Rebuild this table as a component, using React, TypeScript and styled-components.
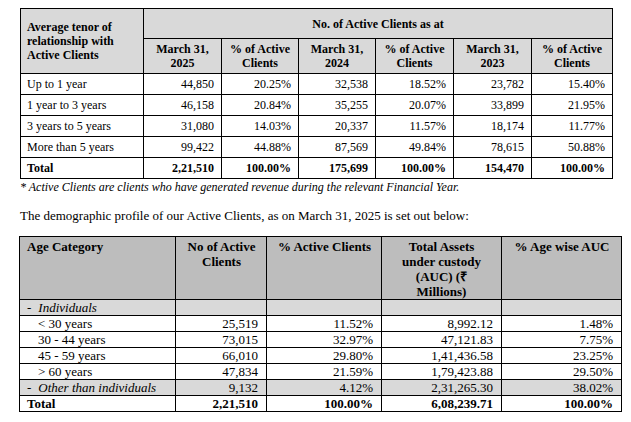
import React from "react";
import styled, { createGlobalStyle } from "styled-components";

const Global = createGlobalStyle`
  html, body { margin: 0; padding: 0; background: #fff; }
  body { font-family: "Liberation Serif", "Times New Roman", serif; color: #000; }
`;

const Page = styled.div`
  width: 631px;
  height: 422px;
  padding: 8px 0 0 20px;
  box-sizing: border-box;
  display: flex;
  flex-direction: column;
  overflow: hidden;
`;

const Table = styled.table<{ $w: number }>`
  border-collapse: collapse;
  table-layout: fixed;
  width: ${(p) => p.$w}px;
  font-size: 12px;
`;

const HeadCell = styled.th<{ $align?: string; $h?: number; $bg?: string }>`
  border: 1px solid #000;
  background: ${(p) => p.$bg || "#d9d9d9"};
  font-weight: bold;
  text-align: ${(p) => p.$align || "center"};
  vertical-align: middle;
  padding: 0 6px;
  line-height: 14px;
  height: ${(p) => p.$h || 20}px;
  box-sizing: border-box;
`;

const Cell = styled.td<{ $bold?: boolean; $left?: boolean }>`
  border: 1px solid #000;
  height: 21px;
  padding: 0 7px 0 6px;
  text-align: ${(p) => (p.$left ? "left" : "right")};
  font-weight: ${(p) => (p.$bold ? "bold" : "normal")};
  line-height: 14px;
  box-sizing: border-box;
`;

const Note = styled.div`
  font-style: italic;
  font-size: 12px;
  line-height: 14px;
  margin-top: 1px;
`;

const Para = styled.p`
  font-size: 13px;
  line-height: 16px;
  margin: 14px 0 0 0;
`;

const Table2 = styled.table`
  border-collapse: collapse;
  table-layout: fixed;
  width: 602px;
  font-size: 13px;
  margin-top: 12px;
  margin-left: -1px;
  border: 1.5px solid #000;
`;

const Head2 = styled.th<{ $left?: boolean; $pad?: number }>`
  border: 1px solid #000;
  background: #bdbdbd;
  font-weight: bold;
  text-align: ${(p) => (p.$left ? "left" : "center")};
  vertical-align: top;
  padding: 2px ${(p) => p.$pad ?? 6}px 0 ${(p) => p.$pad ?? 7}px;
  line-height: 15px;
  height: 62px;
  box-sizing: border-box;
`;

const Row2 = styled.tr<{ $shade?: boolean }>`
  background: ${(p) => (p.$shade ? "#d9d9d9" : "#fff")};
`;

const Cell2 = styled.td<{ $bold?: boolean; $left?: boolean; $indent?: boolean }>`
  border: 1px solid #000;
  height: 16px;
  padding: 0 8px 0 ${(p) => (p.$indent ? 18 : 7)}px;
  text-align: ${(p) => (p.$left ? "left" : "right")};
  font-weight: ${(p) => (p.$bold ? "bold" : "normal")};
  line-height: 15px;
  box-sizing: border-box;
  white-space: nowrap;
`;

const Dashed = styled.span`
  display: inline-flex;
  gap: 7px;
  font-style: italic;
`;

const Plain = styled.span`
  font-style: normal;
`;

const rows1 = [
  ["Up to 1 year", "44,850", "20.25%", "32,538", "18.52%", "23,782", "15.40%"],
  ["1 year to 3 years", "46,158", "20.84%", "35,255", "20.07%", "33,899", "21.95%"],
  ["3 years to 5 years", "31,080", "14.03%", "20,337", "11.57%", "18,174", "11.77%"],
  ["More than 5 years", "99,422", "44.88%", "87,569", "49.84%", "78,615", "50.88%"],
];

const total1 = ["Total", "2,21,510", "100.00%", "175,699", "100.00%", "154,470", "100.00%"];

const rows2 = [
  ["< 30 years", "25,519", "11.52%", "8,992.12", "1.48%"],
  ["30 - 44 years", "73,015", "32.97%", "47,121.83", "7.75%"],
  ["45 - 59 years", "66,010", "29.80%", "1,41,436.58", "23.25%"],
  ["> 60 years", "47,834", "21.59%", "1,79,423.88", "29.50%"],
];

export default function App() {
  const w1 = [123, 78, 77, 77, 78, 78, 81];
  const w2 = [156, 91, 115, 120, 120];
  return (
    <>
      <Global />
      <Page>
        <Table $w={593}>
          <colgroup>
            {w1.map((w, i) => (
              <col key={i} style={{ width: w }} />
            ))}
          </colgroup>
          <thead>
            <tr>
              <HeadCell rowSpan={2} $align="left" $h={30}>
                Average tenor of relationship with Active Clients
              </HeadCell>
              <HeadCell colSpan={6} $h={30}>
                No. of Active Clients as at
              </HeadCell>
            </tr>
            <tr>
              {["March 31, 2025", "% of Active Clients", "March 31, 2024", "% of Active Clients", "March 31, 2023", "% of Active Clients"].map(
                (t, i) => (
                  <HeadCell key={i} $h={35}>
                    {t}
                  </HeadCell>
                )
              )}
            </tr>
          </thead>
          <tbody>
            {rows1.map((r, i) => (
              <tr key={i}>
                {r.map((c, j) => (
                  <Cell key={j} $left={j === 0}>
                    {c}
                  </Cell>
                ))}
              </tr>
            ))}
            <tr>
              {total1.map((c, j) => (
                <Cell key={j} $left={j === 0} $bold>
                  {c}
                </Cell>
              ))}
            </tr>
          </tbody>
        </Table>
        <Note>* Active Clients are clients who have generated revenue during the relevant Financial Year.</Note>
        <Para>The demographic profile of our Active Clients, as on March 31, 2025 is set out below:</Para>
        <Table2>
          <colgroup>
            {w2.map((w, i) => (
              <col key={i} style={{ width: w }} />
            ))}
          </colgroup>
          <thead>
            <tr>
              <Head2 $left>Age Category</Head2>
              <Head2>No of Active Clients</Head2>
              <Head2>% Active Clients</Head2>
              <Head2 $pad={16}>Total Assets under custody (AUC) (₹ Millions)</Head2>
              <Head2>% Age wise AUC</Head2>
            </tr>
          </thead>
          <tbody>
            <Row2 $shade>
              <Cell2 $left>
                <Dashed>
                  <Plain>-</Plain>
                  <span>Individuals</span>
                </Dashed>
              </Cell2>
              <Cell2 />
              <Cell2 />
              <Cell2 />
              <Cell2 />
            </Row2>
            {rows2.map((r, i) => (
              <Row2 key={i}>
                {r.map((c, j) => (
                  <Cell2 key={j} $left={j === 0} $indent={j === 0}>
                    {c}
                  </Cell2>
                ))}
              </Row2>
            ))}
            <Row2 $shade>
              <Cell2 $left>
                <Dashed>
                  <Plain>-</Plain>
                  <span>Other than individuals</span>
                </Dashed>
              </Cell2>
              <Cell2>9,132</Cell2>
              <Cell2>4.12%</Cell2>
              <Cell2>2,31,265.30</Cell2>
              <Cell2>38.02%</Cell2>
            </Row2>
            <Row2>
              <Cell2 $left $bold>Total</Cell2>
              <Cell2 $bold>2,21,510</Cell2>
              <Cell2 $bold>100.00%</Cell2>
              <Cell2 $bold>6,08,239.71</Cell2>
              <Cell2 $bold>100.00%</Cell2>
            </Row2>
          </tbody>
        </Table2>
      </Page>
    </>
  );
}
